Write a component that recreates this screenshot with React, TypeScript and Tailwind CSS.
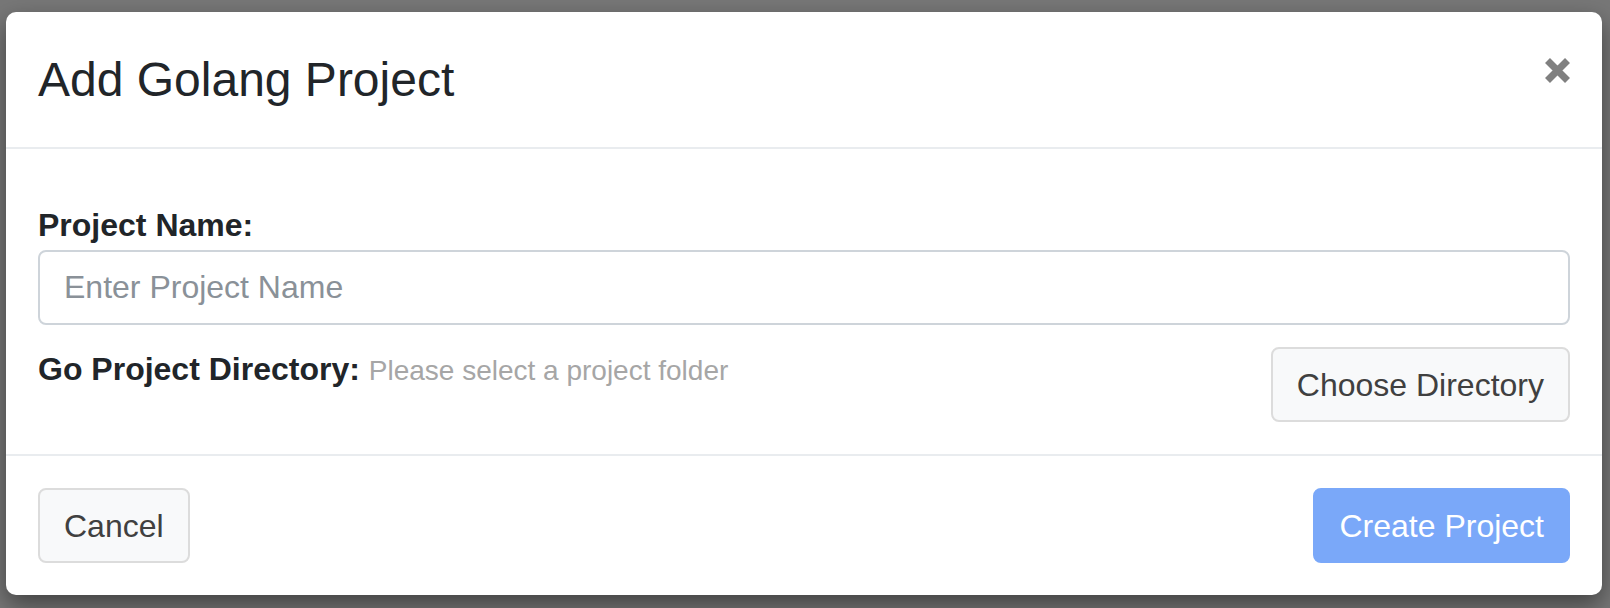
import React from "react";

export default function App() {
  const font = { fontFamily: '"Liberation Sans", Arial, Helvetica, sans-serif' };
  return (
    <div
      className="w-[1610px] h-[608px] bg-[#777777] pt-[12px] pl-[6px] overflow-hidden"
      style={font}
    >
      <div className="w-[1596px] h-[583px] bg-white rounded-[10px] shadow-[0_10px_24px_rgba(0,0,0,0.45)] flex flex-col">
        {/* Header */}
        <div className="flex items-start justify-between px-[32px] pt-[32px] pb-[31px] border-b-2 border-[#e9ecef]">
          <h4 className="text-[48px] leading-[72px] text-[#212529] font-normal m-0">
            Add Golang Project
          </h4>
          <button className="mt-[14px] w-[25px] h-[25px] flex items-center justify-center" aria-label="Close">
            <svg width="25" height="25" viewBox="0 0 25 25">
              <path d="M2.5 2.5 L22.5 22.5 M22.5 2.5 L2.5 22.5" stroke="#808080" strokeWidth="7" strokeLinecap="butt" />
            </svg>
          </button>
        </div>

        {/* Body */}
        <div className="px-[32px] pt-[52px] pb-[32px] flex flex-col">
          <label className="text-[32px] leading-[48px] font-bold text-[#212529] mb-[1px]">
            Project Name:
          </label>
          <input
            type="text"
            placeholder="Enter Project Name"
            className="h-[75px] w-full border-2 border-[#ced4da] rounded-[8px] px-[24px] text-[32px] text-[#495057] placeholder:text-[#8a9198] outline-none"
          />
          <div className="mt-[20px] flex items-start justify-between">
            <div className="text-[32px] leading-[48px]">
              <span className="font-bold text-[#212529]">Go Project Directory:</span>{" "}
              <span className="text-[28px] text-[#a6a6a6]">Please select a project folder</span>
            </div>
            <button className="mt-[2px] h-[75px] px-[24px] bg-[#f8f9fa] border-2 border-[#dcdcdc] rounded-[8px] text-[32px] text-[#404040]">
              Choose Directory
            </button>
          </div>
        </div>

        {/* Footer */}
        <div className="border-t-2 border-[#e9ecef] px-[32px] pt-[32px] flex items-start justify-between">
          <button className="h-[75px] px-[24px] bg-[#f8f9fa] border-2 border-[#dcdcdc] rounded-[8px] text-[32px] text-[#404040]">
            Cancel
          </button>
          <button className="h-[75px] px-[24px] bg-[#7aa8f9] border-2 border-[#7aa8f9] rounded-[8px] text-[32px] text-white">
            Create Project
          </button>
        </div>
      </div>
    </div>
  );
}
